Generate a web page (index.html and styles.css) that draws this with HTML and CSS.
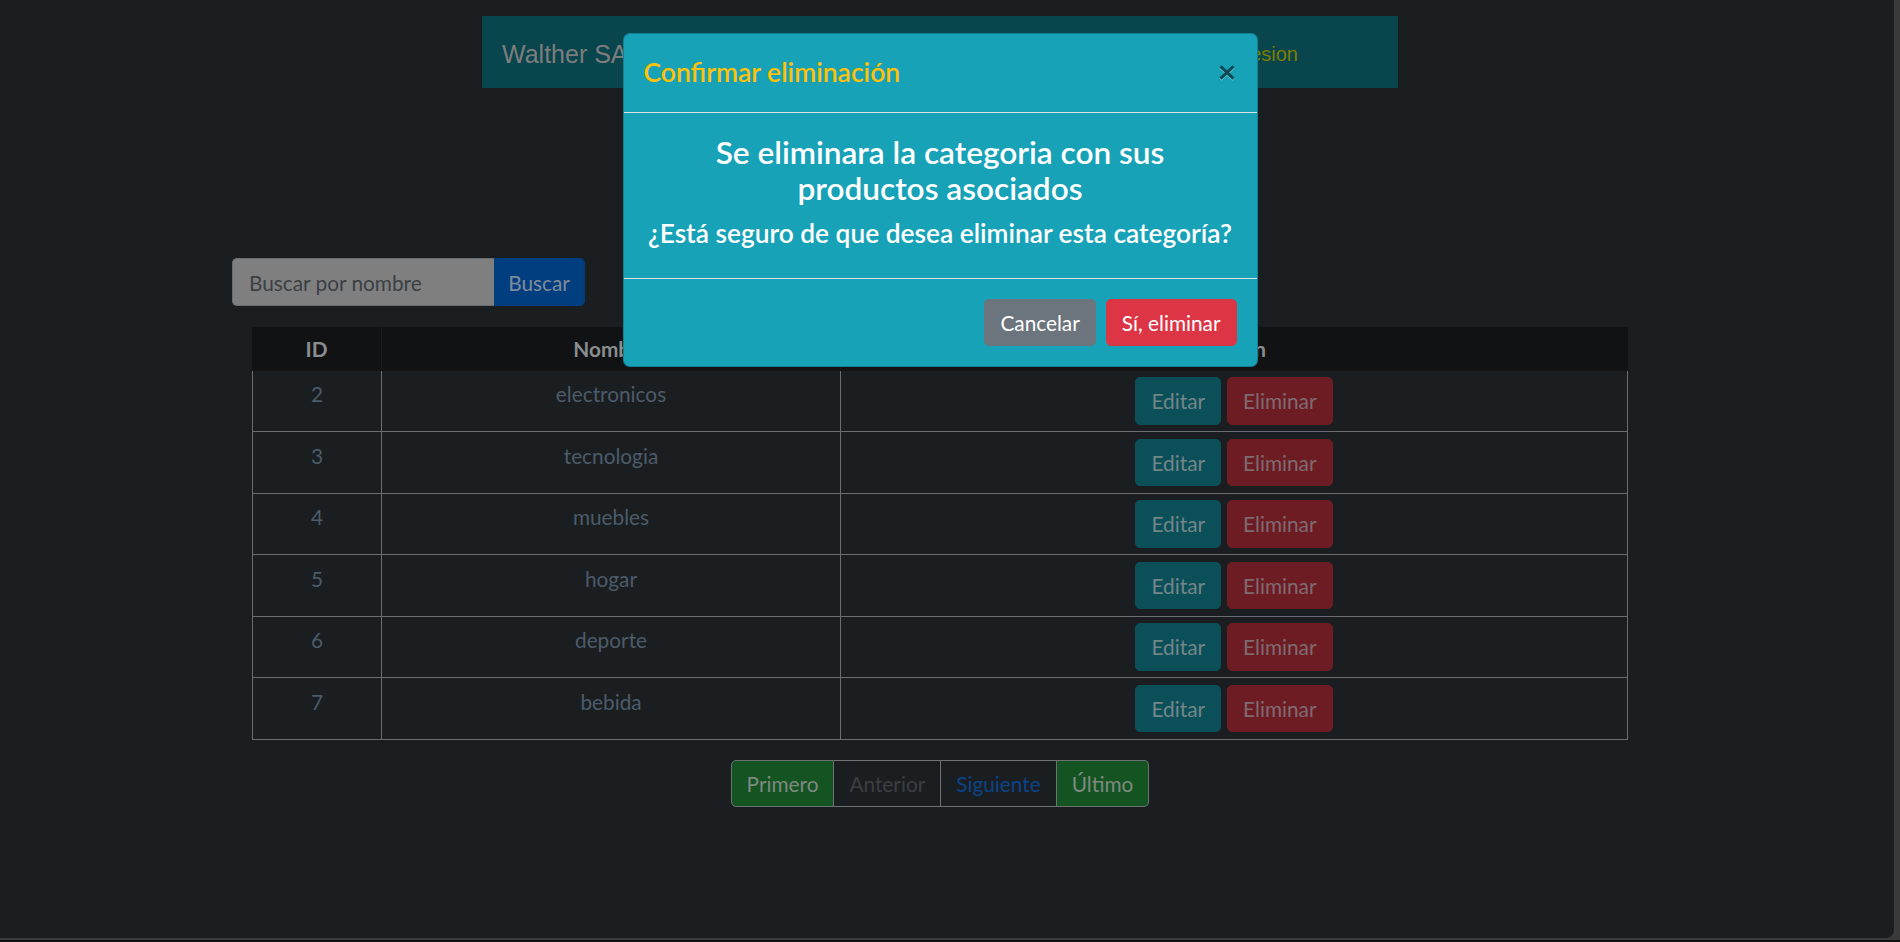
FILE: index.html
```html
<!DOCTYPE html>
<html lang="es">
<head>
<meta charset="utf-8">
<title>Categorías</title>
<link rel="stylesheet" href="styles.css">
</head>
<body>
<div class="window">
  <div class="page">
    <header class="topbar">
      <span class="brand">Walther SA</span>
      <a class="logout" href="#">Cerrar sesion</a>
    </header>
    <main class="content">
      <form class="search">
        <input class="search-input" type="text" placeholder="Buscar por nombre">
        <button class="search-btn" type="button">Buscar</button>
      </form>
      <table class="grid">
        <colgroup>
          <col class="c-id">
          <col class="c-name">
          <col class="c-act">
        </colgroup>
        <thead>
          <tr><th>ID</th><th>Nombre</th><th class="last">Acción</th></tr>
        </thead>
        <tbody>
          <tr><td>2</td><td>electronicos</td><td><div class="actions"><button class="btn-edit">Editar</button><button class="btn-del">Eliminar</button></div></td></tr>
          <tr><td>3</td><td>tecnologia</td><td><div class="actions"><button class="btn-edit">Editar</button><button class="btn-del">Eliminar</button></div></td></tr>
          <tr><td>4</td><td>muebles</td><td><div class="actions"><button class="btn-edit">Editar</button><button class="btn-del">Eliminar</button></div></td></tr>
          <tr><td>5</td><td>hogar</td><td><div class="actions"><button class="btn-edit">Editar</button><button class="btn-del">Eliminar</button></div></td></tr>
          <tr><td>6</td><td>deporte</td><td><div class="actions"><button class="btn-edit">Editar</button><button class="btn-del">Eliminar</button></div></td></tr>
          <tr><td>7</td><td>bebida</td><td><div class="actions"><button class="btn-edit">Editar</button><button class="btn-del">Eliminar</button></div></td></tr>
        </tbody>
      </table>
      <nav class="pager">
        <span class="pg pg-green">Primero</span>
        <span class="pg pg-disabled">Anterior</span>
        <span class="pg pg-link">Siguiente</span>
        <span class="pg pg-green">Último</span>
      </nav>
    </main>
  </div>

  <div class="modal-layer">
    <div class="modal">
      <div class="modal-header">
        <h5 class="modal-title">Confirmar eliminación</h5>
        <button class="modal-close" type="button" aria-label="Cerrar">
          <svg width="16" height="15" viewBox="0 0 16 15"><path d="M1.5 1.3 L14.5 13.7 M14.5 1.3 L1.5 13.7" stroke="#0a4a53" stroke-width="3" fill="none"/></svg>
        </button>
      </div>
      <div class="modal-body">
        <h4 class="msg-main">Se eliminara la categoria con sus<br>productos asociados</h4>
        <h5 class="msg-sub">¿Está seguro de que desea eliminar esta categoría?</h5>
      </div>
      <div class="modal-footer">
        <button class="btn btn-secondary" type="button">Cancelar</button>
        <button class="btn btn-danger" type="button">Sí, eliminar</button>
      </div>
    </div>
  </div>
</div>
</body>
</html>
```

FILE: styles.css
```css
* { box-sizing: border-box; }

html, body { margin: 0; padding: 0; }

body {
  width: 1900px;
  height: 942px;
  overflow: hidden;
  background: #3a3a3a;
  box-shadow: inset 0 -2px 0 #111111;
  font-family: "Lato", "Open Sans", sans-serif;
}

.window {
  position: relative;
  width: 1894px;
  height: 938px;
  background: #1b1e21;
  border-bottom-right-radius: 8px;
  overflow: hidden;
}

.page {
  width: 1880px;
  padding-top: 16px;
}

/* top bar */
.topbar {
  width: 916px;
  height: 72px;
  margin: 0 auto;
  background: #08454d;
  display: flex;
  align-items: center;
  justify-content: space-between;
  padding: 4px 100px 0 20px;
  font-family: "Liberation Sans", Arial, sans-serif;
}
.brand { color: #7d7d7d; font-size: 25px; }
.logout { color: #7f7d00; text-decoration: none; font-size: 20px; }

/* content */
.content {
  width: 1416px;
  margin: 170px auto 0;
}

.search {
  display: flex;
  margin: 0;
}
.search-input {
  width: 261.5px;
  height: 48px;
  margin: 0;
  background: #7f7f7f;
  border: 1px solid #6a6d70;
  border-right: none;
  border-radius: 5px 0 0 5px;
  padding: 0 16px;
  font-family: "Lato", sans-serif;
  font-size: 20.8px;
  color: #3a3f44;
  outline: none;
}
.search-input::placeholder { color: #3b4045; opacity: 1; }
.search-btn {
  width: 91px;
  height: 48px;
  margin: 0;
  background: #003e80;
  border: 1px solid #003e80;
  border-radius: 0 5px 5px 0;
  color: #808a99;
  font-family: "Lato", sans-serif;
  font-size: 20.8px;
  padding: 0;
}

/* table */
.grid {
  width: 1376px;
  margin: 20.5px 20px 0;
  border-collapse: separate;
  border-spacing: 0;
  table-layout: fixed;
  font-size: 20.8px;
  line-height: 30px;
}
.c-id { width: 130px; }
.c-name { width: 459px; }
.c-act { width: 787px; }

.grid th {
  background: #111214;
  color: #8a8d90;
  font-weight: 700;
  text-align: center;
  padding: 7.5px 7px 4.5px;
  border-right: 1px solid #1a1d20;
  border-bottom: 2px solid #131517;
}
.grid th.last { border-right: none; }

.grid td {
  color: #4c5b69;
  text-align: center;
  vertical-align: top;
  line-height: 33px;
  padding: 6.5px 7px;
  border-right: 1px solid #6b6d70;
  border-bottom: 1px solid #6b6d70;
}
.grid td:first-child { border-left: 1px solid #6b6d70; }

.actions {
  display: flex;
  justify-content: center;
  gap: 6px;
}
.btn-edit, .btn-del {
  height: 47.5px;
  padding: 0 15px;
  border-radius: 5px;
  font-family: "Lato", sans-serif;
  font-size: 20.8px;
  margin: 0;
}
.btn-edit {
  background: #0b5059;
  border: 1px solid #0b5059;
  color: #74858a;
}
.btn-del {
  background: #6e1c24;
  border: 1px solid #6e1c24;
  color: #7e6b71;
}

/* pager */
.pager {
  display: flex;
  justify-content: center;
  margin-top: 20.5px;
}
.pg {
  height: 47px;
  padding: 0 15px;
  border: 1px solid #6f7173;
  font-size: 20.8px;
  line-height: 45px;
  background: #1b1e21;
}
.pg + .pg { border-left: none; }
.pg:first-child { border-radius: 5px 0 0 5px; }
.pg:last-child { border-radius: 0 5px 5px 0; }
.pg-green { background: #145423; color: #7e8a7f; }
.pg-disabled { color: #3b3f43; }
.pg-link { color: #0b4388; }

/* modal */
.modal-layer {
  position: absolute;
  top: 0;
  left: 0;
  width: 1880px;
  display: flex;
  justify-content: center;
  padding-top: 33px;
}
.modal {
  width: 635px;
  background: #17a2b8;
  border: 1px solid rgba(0, 0, 0, 0.2);
  border-radius: 7px;
}
.modal-header {
  display: flex;
  align-items: center;
  justify-content: space-between;
  padding: 20px;
  border-bottom: 1px solid #dee2e6;
}
.modal-title {
  margin: 0;
  font-size: 26.5px;
  line-height: 37.5px;
  font-weight: 600;
  color: #ffc107;
}
.modal-close {
  width: 16px;
  height: 15px;
  margin: 0 1.5px 0 0;
  padding: 0;
  border: none;
  background: none;
  display: flex;
  filter: drop-shadow(0 1px 0 rgba(150, 215, 225, 0.7));
}
.modal-body {
  padding: 21px 20px 20px;
  text-align: center;
  color: #ffffff;
}
.msg-main {
  margin: 0 0 12px;
  font-size: 31.6px;
  line-height: 36px;
  font-weight: 600;
}
.msg-sub {
  margin: 0 0 10px;
  font-size: 26.3px;
  line-height: 30px;
  font-weight: 600;
  white-space: nowrap;
}
.modal-footer {
  display: flex;
  justify-content: flex-end;
  gap: 10px;
  padding: 20px;
  border-top: 1px solid #dee2e6;
}
.btn {
  height: 47.5px;
  padding: 0 15px;
  margin: 0;
  font-family: "Lato", sans-serif;
  font-size: 20.8px;
  border-radius: 5px;
  color: #ffffff;
}
.btn-secondary { background: #6c757d; border: 1px solid #6c757d; }
.btn-danger { background: #dc3545; border: 1px solid #dc3545; }
```
